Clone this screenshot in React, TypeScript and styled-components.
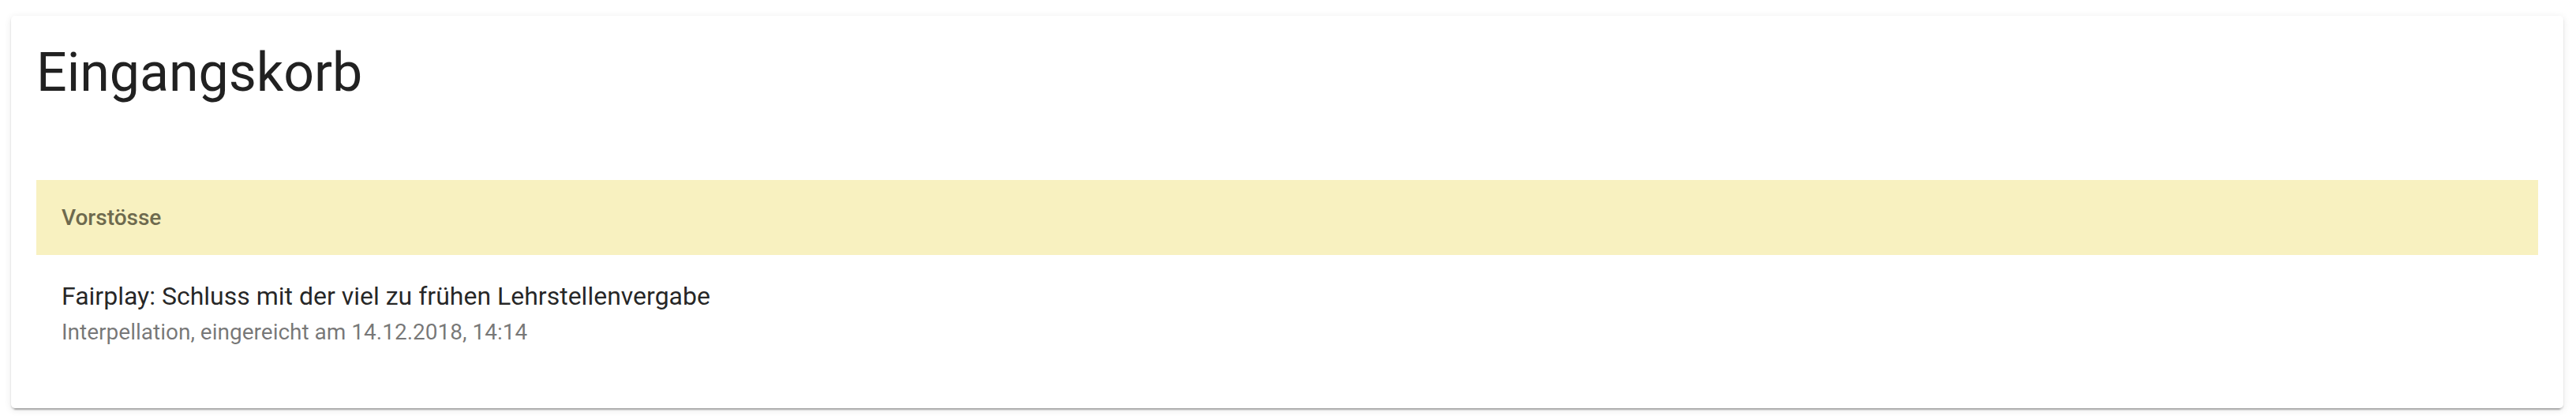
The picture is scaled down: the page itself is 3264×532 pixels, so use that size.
import React from 'react';
import styled, { createGlobalStyle } from 'styled-components';

const GlobalStyle = createGlobalStyle`
  html, body {
    margin: 0;
    padding: 0;
    background: #ffffff;
  }
  body {
    font-family: Roboto, 'Liberation Sans', sans-serif;
    -webkit-font-smoothing: antialiased;
  }
`;

type Vorstoss = {
  title: string;
  kind: string;
  submitted: string;
};

const vorstoesse: Vorstoss[] = [
  {
    title: 'Fairplay: Schluss mit der viel zu frühen Lehrstellenvergabe',
    kind: 'Interpellation',
    submitted: '14.12.2018, 14:14',
  },
];

const App: React.FC = () => {
  return (
    <>
      <GlobalStyle />
      <Page>
        <Card>
          <Title>Eingangskorb</Title>
          <List>
            <SubHeader>Vorstösse</SubHeader>
            {vorstoesse.map((item) => (
              <ListItem key={item.title}>
                <Primary>{item.title}</Primary>
                <Secondary>
                  {item.kind}, eingereicht am {item.submitted}
                </Secondary>
              </ListItem>
            ))}
          </List>
        </Card>
      </Page>
    </>
  );
};

export default App;

const Page = styled.div`
  padding: 20px 16px 17px 14px;
`;

const Card = styled.div`
  background: #ffffff;
  border-radius: 5px;
  padding: 32px 32px 34px;
  box-shadow: 0 2px 2px 0 rgba(0, 0, 0, 0.14), 0 6px 2px -4px rgba(0, 0, 0, 0.2),
    0 2px 10px 0 rgba(0, 0, 0, 0.1);
`;

const Title = styled.h1`
  margin: 0;
  font-size: 68px;
  font-weight: 400;
  line-height: 80px;
  color: rgba(0, 0, 0, 0.87);
`;

const List = styled.div`
  margin-top: 80px;
  padding: 16px 0;
`;

const SubHeader = styled.div`
  display: flex;
  align-items: center;
  height: 95px;
  padding: 0 32px;
  background: #f8f1c0;
  color: #6e6a4e;
  font-size: 28px;
  font-weight: 500;
`;

const ListItem = styled.div`
  display: flex;
  flex-direction: column;
  padding: 28px 32px 24px;
`;

const Primary = styled.div`
  font-size: 32px;
  line-height: 48px;
  color: rgba(0, 0, 0, 0.87);
`;

const Secondary = styled.div`
  font-size: 28px;
  line-height: 44px;
  color: rgba(0, 0, 0, 0.54);
`;
